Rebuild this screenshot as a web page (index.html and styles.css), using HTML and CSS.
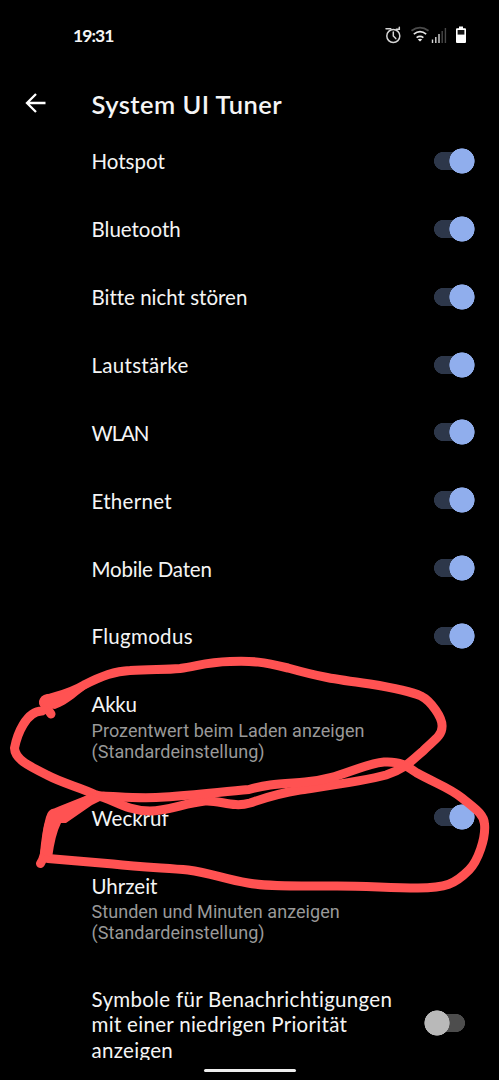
FILE: index.html
```html
<!DOCTYPE html>
<html lang="de">
<head>
<meta charset="utf-8">
<title>System UI Tuner</title>
<link rel="stylesheet" href="styles.css">
</head>
<body>
<div class="screen">
  <header class="status">
    <span class="clock">19:31</span>
    <svg class="status-icons" width="86" height="22" viewBox="384 24 86 22" fill="none">
      <g stroke="#d5d5d5" stroke-width="1.5" stroke-linecap="round">
        <circle cx="393.3" cy="36" r="6.5"/>
        <path d="M393.3 32v4l2.500 2.600M386 28.800h4.800M396.300 29.300h3v-2"/>
      </g>
      <path d="M411.500 30.800q8.500-6.500 17 0" stroke="#4b4b4b" stroke-width="1.800"/>
      <path d="M413.800 34.200q6.200-5 12.400 0M416.600 37.600q3.400-2.600 6.800 0" stroke="#e5e5e5" stroke-width="1.700"/>
      <path d="M417.800 39.400q2.200-1.400 4.400 0l-2.200 2z" fill="#eee"/>
      <path d="M432.500 39.500V43M435.800 37v6M439 34v9" stroke="#d8d8d8" stroke-width="1.400"/>
      <path d="M442.200 31v12M445.400 28v15" stroke="#484848" stroke-width="1.400"/>
      <path d="M459 26.500h4v1.700h2q1 0 1 1V42q0 1-1 1h-8q-1 0-1-1V29.200q0-1 1-1h2z" fill="#fff"/>
      <path d="M457.600 30h6.800v4.600h-6.800z" fill="#161616"/>
    </svg>
  </header>
  <div class="appbar">
    <svg class="back" width="22" height="20" viewBox="0 0 22 20" fill="none" stroke="#fff" stroke-width="2.300"><path d="M20.500 10H2M11 1L2 10l9 9"/></svg>
    <h1 class="title">System UI Tuner</h1>
  </div>
  <main class="list">
    <div class="row"><span class="label">Hotspot</span><i class="switch"></i></div>
    <div class="row"><span class="label">Bluetooth</span><i class="switch"></i></div>
    <div class="row"><span class="label">Bitte nicht stören</span><i class="switch"></i></div>
    <div class="row"><span class="label wide">Lautstärke</span><i class="switch"></i></div>
    <div class="row"><span class="label caps">WLAN</span><i class="switch"></i></div>
    <div class="row"><span class="label wide">Ethernet</span><i class="switch"></i></div>
    <div class="row"><span class="label narrow">Mobile Daten</span><i class="switch"></i></div>
    <div class="row"><span class="label wide">Flugmodus</span><i class="switch"></i></div>
    <div class="row detailed"><div><span class="label narrow">Akku</span><p class="summary">Prozentwert beim Laden anzeigen<br>(Standardeinstellung)</p></div></div>
    <div class="row"><span class="label">Weckruf</span><i class="switch"></i></div>
    <div class="row detailed"><div><span class="label">Uhrzeit</span><p class="summary">Stunden und Minuten anzeigen<br>(Standardeinstellung)</p></div></div>
    <div class="row tall"><span class="label wide">Symbole für Benachrichtigungen<br>mit einer niedrigen Priorität<br>anzeigen</span><i class="switch off"></i></div>
  </main>
  <footer class="nav"><span class="pill"></span></footer>
  <svg class="ink" width="499" height="1080" viewBox="0 0 499 1080">
    <g fill="none" stroke="#ff5252" stroke-width="9" stroke-linecap="round" stroke-linejoin="round">
      <path d="M51 714L43.500 703C44 697 64 697 84 685C102 676 115 671 130 670.500C150 669 165 670 180 668.500C198 666 207 662 230 661.500C253 660.500 263 662 288 668C320 677 333 679 370 684C400 689 412 692 421 696C431 701 443 718 442 727C442 736 433 741 423 751C411 761 405 769 386 775C365 781 320 787 300 790C275 794 265 798 250 803C233 808 220 800 205 801C185 803 168 811 150 811C126 811 113 799 96 795C80 787 64 784 47 775C27 765 15 759 14.500 748C17 735 26 711 42 711"/>
      <path d="M40.500 863.500C50 850 43 829 54 814L62 814C75 809 88 796 103 796C125 797 142 799 165 797C195 795 220 792 249 789.500C268 784 280 784 305 782C338 780 361 764 384 762C400 761 407 766 417 773C437 784 450 788 462 798C474 808 484 814 484.500 824C486 838 478 861 469 870C455 884 446 888 418 888C389 888 368 886 337 886C300 886 270 887 248 883C224 879 211 873 188 870C165 868 140 867 113 864L48 858.500"/>
    </g>
    <path d="M39 702Q40 695 47 694L62 693 84 685 92 685C78 693 70 704 55 709L48 708ZM46 817Q48 809 54 808.500L60 806 90 794 104 799 92 805 66 823 61 823Q55 835 52 858L40 853Q42 831 46 817Z" fill="#ff5252"/>
  </svg>
</div>
</body>
</html>
```
FILE: styles.css
```css
body { margin: 0; background: #000; }
.screen { position: relative; display: flex; flex-direction: column; width: 499px; height: 1080px; overflow: hidden; background: #000; color: #f5f5f5; font-family: Lato, "Open Sans", sans-serif; font-variant-ligatures: none; }
.status { display: flex; flex: none; align-items: center; justify-content: space-between; box-sizing: border-box; height: 70px; padding: 0 29px 0 73px; }
.clock { font-size: 17.500px; font-weight: 700; line-height: 24px; padding-top: 2px; letter-spacing: -.9px; }
.status-icons { flex: none; }
.appbar { display: flex; flex: none; align-items: center; height: 57px; padding: 0 25px; gap: 44.500px; }
.back { flex: none; margin-top: 9px; }
.title { margin: 10px 0 0; font-size: 25.500px; font-weight: 600; line-height: 32px; letter-spacing: .45px; white-space: nowrap; }
.list { flex: 1; min-height: 0; overflow: hidden; }
.row { display: flex; box-sizing: border-box; height: 67.860px; align-items: center; justify-content: space-between; padding: 0 24px 0 91.500px; }
.label { display: block; font-size: 20.500px; line-height: 25.600px; padding-top: 2.500px; white-space: nowrap; }
.wide { letter-spacing: .3px; }
.narrow { letter-spacing: -.2px; }
.caps { letter-spacing: -1.100px; }
.detailed { height: 113.500px; align-items: flex-start; padding-top: 20px; }
.summary { margin: 2px 0 0; font-family: Roboto, sans-serif; font-size: 18px; line-height: 21px; color: #999; letter-spacing: .05px; white-space: nowrap; }
.tall { height: 117px; padding-right: 34px; }
.tall .label { padding-top: 4px; }
.switch { display: block; flex: none; box-sizing: border-box; width: 41px; height: 26px; background: radial-gradient(circle at 28px 13px, #90aeed 12.300px, transparent 12.900px), linear-gradient(#2d374a, #2d374a) 9px 4px / 24px 18px no-repeat, radial-gradient(circle at 9px 13px, #2d374a 8.700px, transparent 9.300px); }
.switch.off { background: radial-gradient(circle at 13px 13px, #b9b9b9 12.300px, transparent 12.900px), linear-gradient(#4d4d4d, #4d4d4d) 9px 4px / 23px 18px no-repeat, radial-gradient(circle at 32px 13px, #4d4d4d 8.700px, transparent 9.300px); }
.nav { display: flex; flex: none; justify-content: center; height: 20px; box-sizing: border-box; padding-top: 9px; }
.pill { width: 92px; height: 3px; border-radius: 2px; background: #eee; }
.ink { position: absolute; inset: 0; pointer-events: none; }
```
